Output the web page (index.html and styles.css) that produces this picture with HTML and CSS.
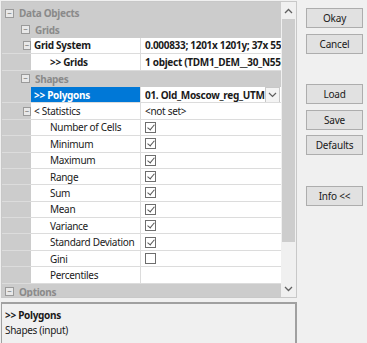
FILE: index.html
```html
<!DOCTYPE html>
<html>
<head>
    <title>Tool Settings</title>
    <link rel="stylesheet" href="styles.css">
</head>
<body>
    <div class="dialog">
        <div class="main">
            <div class="grid">
                <div class="rows">
                    <div class="row cat"><span class="tog">−</span><span class="cat-name">Data Objects</span></div>
                    <div class="row cat lvl1"><span class="tog">−</span><span class="cat-name">Grids</span></div>
                    <div class="row prop">
                        <div class="margin"><span class="tog">−</span></div>
                        <div class="name bold">Grid System</div>
                        <div class="value bold">0.000833; 1201x 1201y; 37x 55y</div>
                    </div>
                    <div class="row prop">
                        <div class="margin"></div>
                        <div class="name bold sub">&gt;&gt; Grids</div>
                        <div class="value bold">1 object (TDM1_DEM__30_N55E037_DEM)</div>
                    </div>
                    <div class="row cat lvl1"><span class="tog">−</span><span class="cat-name">Shapes</span></div>
                    <div class="row prop">
                        <div class="margin"></div>
                        <div class="name bold selected">&gt;&gt; Polygons</div>
                        <div class="value bold combo">
                            <span class="combo-text">01. Old_Moscow_reg_UTM</span>
                            <span class="combo-btn">
                                <svg width="9" height="6" viewBox="0 0 9 6"><path d="M1 1 L4.5 4.5 L8 1" fill="none" stroke="#606060" stroke-width="1.2"/></svg>
                            </span>
                        </div>
                    </div>
                    <div class="row prop">
                        <div class="margin"><span class="tog">−</span></div>
                        <div class="name">&lt; Statistics</div>
                        <div class="value">&lt;not set&gt;</div>
                    </div>
                    <div class="row prop"><div class="margin"></div><div class="name sub">Number of Cells</div><div class="value"><span class="check on"></span></div></div>
                    <div class="row prop"><div class="margin"></div><div class="name sub">Minimum</div><div class="value"><span class="check on"></span></div></div>
                    <div class="row prop"><div class="margin"></div><div class="name sub">Maximum</div><div class="value"><span class="check on"></span></div></div>
                    <div class="row prop"><div class="margin"></div><div class="name sub">Range</div><div class="value"><span class="check on"></span></div></div>
                    <div class="row prop"><div class="margin"></div><div class="name sub">Sum</div><div class="value"><span class="check on"></span></div></div>
                    <div class="row prop"><div class="margin"></div><div class="name sub">Mean</div><div class="value"><span class="check on"></span></div></div>
                    <div class="row prop"><div class="margin"></div><div class="name sub">Variance</div><div class="value"><span class="check on"></span></div></div>
                    <div class="row prop"><div class="margin"></div><div class="name sub">Standard Deviation</div><div class="value"><span class="check on"></span></div></div>
                    <div class="row prop"><div class="margin"></div><div class="name sub">Gini</div><div class="value"><span class="check"></span></div></div>
                    <div class="row prop"><div class="margin"></div><div class="name sub">Percentiles</div><div class="value"></div></div>
                    <div class="row cat"><span class="tog">−</span><span class="cat-name">Options</span></div>
                </div>
                <div class="vscroll">
                    <div class="arrow">
                        <svg width="9" height="6" viewBox="0 0 9 6"><path d="M1 5 L4.5 1.5 L8 5" fill="none" stroke="#606060" stroke-width="1.3"/></svg>
                    </div>
                    <div class="track"><div class="thumb"></div></div>
                    <div class="arrow">
                        <svg width="9" height="6" viewBox="0 0 9 6"><path d="M1 1 L4.5 4.5 L8 1" fill="none" stroke="#606060" stroke-width="1.3"/></svg>
                    </div>
                </div>
            </div>
            <div class="info">
                <div class="bold">&gt;&gt; Polygons</div>
                <div>Shapes (input)</div>
            </div>
        </div>
        <div class="buttons">
            <button>Okay</button>
            <button>Cancel</button>
            <button class="gap">Load</button>
            <button>Save</button>
            <button>Defaults</button>
            <button class="gap">Info &lt;&lt;</button>
        </div>
    </div>
</body>
</html>
```

FILE: styles.css
```css
body {
    margin: 0;
    background: #f0f0f0;
    font-family: "Noto Sans", "Open Sans", sans-serif;
    font-size: 10px;
    letter-spacing: -0.3px;
    color: #1a1a1a;
}

.dialog {
    display: flex;
    width: 367px;
    height: 343px;
    overflow: hidden;
}

.main {
    width: 296px;
    margin-left: 1px;
    padding-top: 1px;
    display: flex;
    flex-direction: column;
}

.grid {
    display: flex;
    height: 297px;
    box-sizing: border-box;
    border: 1px solid #c8c8c8;
    background: #cccccc;
}

.rows {
    flex: 1;
    min-width: 0;
    padding-top: 3px;
    overflow: hidden;
}

.row {
    height: 16.4px;
    box-sizing: border-box;
    display: flex;
    align-items: center;
    white-space: nowrap;
    overflow: hidden;
}

.cat {
    background: #cccccc;
    color: #8a8a8a;
    font-weight: bold;
    padding-left: 3px;
}

.cat.lvl1 {
    padding-left: 19px;
}

.cat-name {
    margin-left: 5px;
}

.tog {
    display: inline-block;
    width: 7px;
    height: 7px;
    border: 1px solid #9a9a9a;
    background: #e8e8e8;
    color: #6a6a6a;
    font-size: 8px;
    line-height: 6px;
    text-align: center;
    font-weight: normal;
    letter-spacing: 0;
}

.prop {
    align-items: stretch;
    border-bottom: 1px solid #dcdcdc;
    background: #cccccc;
}

.margin {
    width: 29px;
    flex: none;
    display: flex;
    align-items: center;
    padding-left: 21px;
    box-sizing: border-box;
    background: #cccccc;
}

.name, .value {
    background: #ffffff;
    display: flex;
    align-items: center;
    overflow: hidden;
}

.name {
    width: 110px;
    flex: none;
    padding-left: 3px;
    box-sizing: border-box;
    border-right: 1px solid #dcdcdc;
}

.name.sub {
    padding-left: 19px;
}

.value {
    flex: 1;
    min-width: 0;
    padding-left: 4px;
}

.bold {
    font-weight: bold;
}

.selected {
    background: #0078d7;
    color: #ffffff;
}

.combo {
    padding-right: 1px;
}

.combo-text {
    flex: 1;
    min-width: 0;
    overflow: hidden;
}

.combo-btn {
    width: 13px;
    height: 14px;
    flex: none;
    border: 1px solid #c8c8c8;
    background: #f4f4f4;
    display: flex;
    align-items: center;
    justify-content: center;
}

.check {
    width: 11px;
    height: 11px;
    box-sizing: border-box;
    border: 1px solid #6e6e6e;
    background: #ffffff;
    position: relative;
}

.check.on::after {
    content: "";
    position: absolute;
    left: 3px;
    top: 0px;
    width: 3px;
    height: 6px;
    border-right: 1px solid #555555;
    border-bottom: 1px solid #555555;
    transform: rotate(40deg);
}

.vscroll {
    width: 15px;
    flex: none;
    background: #f0f0f0;
    display: flex;
    flex-direction: column;
}

.arrow {
    height: 17px;
    display: flex;
    align-items: center;
    justify-content: center;
}

.track {
    flex: 1;
    padding: 0 1px;
}

.thumb {
    height: 223px;
    background: #cdcdcd;
}

.info {
    margin-top: 4px;
    flex: 1;
    border-top: 2px solid #a0a0a0;
    border-left: 1px solid #a0a0a0;
    border-right: 2px solid #a0a0a0;
    padding: 4px 3px;
    line-height: 15px;
}

.buttons {
    display: flex;
    flex-direction: column;
    align-items: flex-start;
    padding: 8px 0 0 9px;
}

button {
    width: 57px;
    height: 20px;
    margin-bottom: 5.5px;
    background: #e1e1e1;
    border: 1px solid #adadad;
    font-family: "Noto Sans", "Open Sans", sans-serif;
    font-size: 10px;
    letter-spacing: -0.2px;
    color: #1a1a1a;
    padding: 0;
}

button.gap {
    margin-top: 25px;
}
```
